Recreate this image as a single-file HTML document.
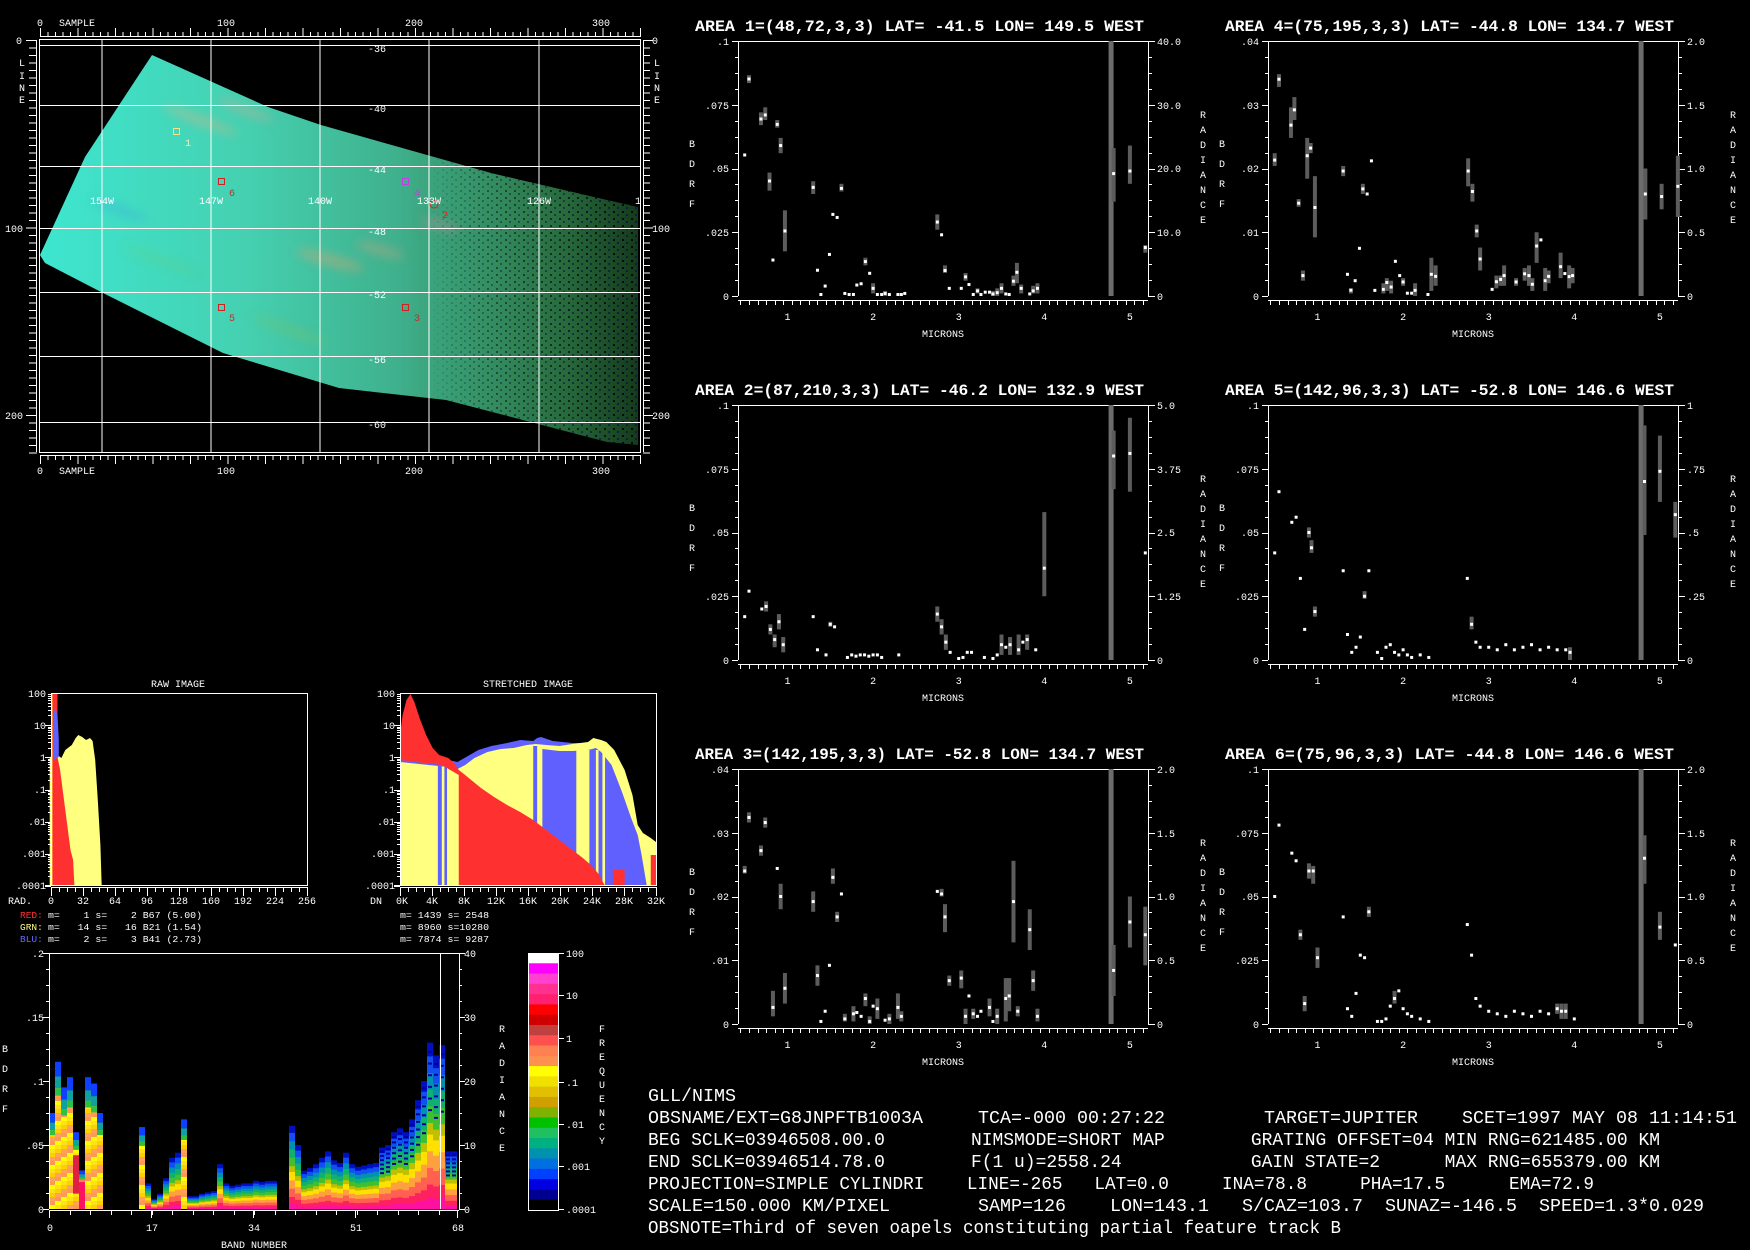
<!DOCTYPE html>
<html><head><meta charset="utf-8">
<style>
html,body{margin:0;padding:0;background:#000;}
svg{display:block;}
text{font-family:"Liberation Mono",monospace;fill:#fff;}
.s{font-size:10px;}
.t{font-size:16px;font-weight:bold;}
.b{font-size:18px;}
.m{font-size:9.5px;}
.c{text-anchor:middle;}
.e{text-anchor:end;}
</style></head>
<body>
<svg id="sv" xmlns="http://www.w3.org/2000/svg" width="1750" height="1250" viewBox="0 0 1750 1250">
<rect width="1750" height="1250" fill="#000"/>
<defs>
<linearGradient id="ig" x1="0" y1="0" x2="1" y2="0" gradientUnits="objectBoundingBox">
<stop offset="0" stop-color="#3ee6cf"/>
<stop offset="0.35" stop-color="#45d0b0"/>
<stop offset="0.6" stop-color="#3fb08c"/>
<stop offset="0.75" stop-color="#348f62"/>
<stop offset="0.88" stop-color="#276a3c"/>
<stop offset="1" stop-color="#143a1c"/>
</linearGradient>
<linearGradient id="mg" x1="430" y1="0" x2="640" y2="0" gradientUnits="userSpaceOnUse">
<stop offset="0" stop-color="#000"/>
<stop offset="0.5" stop-color="#fff" stop-opacity="0.5"/>
<stop offset="1" stop-color="#fff" stop-opacity="0.9"/>
</linearGradient>
<mask id="dm"><rect x="0" y="0" width="700" height="500" fill="url(#mg)"/></mask>
<filter id="bl"><feGaussianBlur stdDeviation="5"/></filter>
<pattern id="dots" width="9" height="7" patternUnits="userSpaceOnUse">
<rect x="1" y="1" width="2" height="2" fill="#000"/><rect x="5" y="4" width="2" height="2" fill="#0a1a40"/>
</pattern>
<clipPath id="imc"><polygon points="152,55 268,107 321,125 491,173 607,200 638,207 638,445 607,442 446,400 339,388 223,353 103,293 45,263 40,255 85,157"/></clipPath>
</defs>

<g id="img">
<polygon points="152,55 268,107 321,125 491,173 607,200 638,207 638,445 607,442 446,400 339,388 223,353 103,293 45,263 40,255 85,157" fill="url(#ig)"/>
<g clip-path="url(#imc)">
<g filter="url(#bl)" opacity="0.4">
<ellipse cx="200" cy="120" rx="40" ry="5" fill="#e8b080" transform="rotate(20 200 120)"/>
<ellipse cx="245" cy="110" rx="30" ry="4" fill="#f0a090" transform="rotate(20 245 110)"/>
<ellipse cx="330" cy="260" rx="35" ry="6" fill="#e8a070" transform="rotate(15 330 260)"/>
<ellipse cx="380" cy="250" rx="25" ry="5" fill="#d8a080" transform="rotate(15 380 250)"/>
<ellipse cx="440" cy="225" rx="20" ry="5" fill="#c890a0" transform="rotate(15 440 225)"/>
<ellipse cx="120" cy="210" rx="30" ry="4" fill="#40a0e0" transform="rotate(20 120 210)"/>
<ellipse cx="160" cy="260" rx="40" ry="4" fill="#60d080" transform="rotate(20 160 260)"/>
<ellipse cx="290" cy="330" rx="40" ry="4" fill="#80c060" transform="rotate(20 290 330)"/>
</g>
<g mask="url(#dm)">
<rect x="420" y="150" width="230" height="300" fill="url(#dots)"/>
</g>
</g>
<g stroke="#fff" stroke-width="1" fill="none">
<rect x="39.5" y="39.5" width="601" height="413"/>
<line x1="102" y1="40" x2="102" y2="452"/><line x1="211" y1="40" x2="211" y2="452"/><line x1="320" y1="40" x2="320" y2="452"/><line x1="429" y1="40" x2="429" y2="452"/><line x1="539" y1="40" x2="539" y2="452"/>
<line x1="40" y1="45.5" x2="640" y2="45.5"/><line x1="40" y1="105.5" x2="640" y2="105.5"/><line x1="40" y1="166.5" x2="640" y2="166.5"/><line x1="40" y1="228.5" x2="640" y2="228.5"/><line x1="40" y1="292.5" x2="640" y2="292.5"/><line x1="40" y1="356.5" x2="640" y2="356.5"/><line x1="40" y1="422.5" x2="640" y2="422.5"/>
</g>
<g id="imgticks" stroke="#fff" stroke-width="1"></g>
<rect x="173.5" y="128.5" width="6" height="6" fill="none" stroke="#ffe080"/>
<rect x="218.5" y="178.5" width="6" height="6" fill="none" stroke="#d02020"/>
<rect x="402.5" y="178.5" width="6" height="6" fill="none" stroke="#c040e0"/>
<circle cx="434" cy="204" r="4" fill="none" stroke="#e02020"/>
<rect x="218.5" y="304.5" width="6" height="6" fill="none" stroke="#d02020"/>
<rect x="402.5" y="304.5" width="6" height="6" fill="none" stroke="#d02020"/>
<text class="s" x="185" y="146" style="fill:#f0f0c0">1</text>
<text class="s" x="229" y="196" style="fill:#c03030">6</text>
<text class="s" x="414" y="196" style="fill:#c040e0">4</text>
<text class="s" x="442" y="218" style="fill:#e02020">2</text>
<text class="s" x="229" y="321" style="fill:#c03030">5</text>
<text class="s" x="414" y="321" style="fill:#c03030">3</text>
<text class="s" x="37" y="26">0</text><text class="s" x="59" y="26">SAMPLE</text>
<text class="s c" x="226" y="26">100</text><text class="s c" x="414" y="26">200</text><text class="s c" x="601" y="26">300</text>
<text class="s" x="37" y="474">0</text><text class="s" x="59" y="474">SAMPLE</text>
<text class="s c" x="226" y="474">100</text><text class="s c" x="414" y="474">200</text><text class="s c" x="601" y="474">300</text>
<text class="s" x="16" y="44">0</text><text class="s" x="5" y="232">100</text><text class="s" x="5" y="419">200</text>
<text class="s" x="652" y="44">0</text><text class="s" x="652" y="232">100</text><text class="s" x="652" y="419">200</text>
<text class="s c" x="22" y="66">L</text><text class="s c" x="22" y="79">I</text><text class="s c" x="22" y="91">N</text><text class="s c" x="22" y="103">E</text>
<text class="s c" x="657" y="66">L</text><text class="s c" x="657" y="79">I</text><text class="s c" x="657" y="91">N</text><text class="s c" x="657" y="103">E</text>
<text class="s c" x="377" y="52">-36</text><text class="s c" x="377" y="112">-40</text><text class="s c" x="377" y="173">-44</text><text class="s c" x="377" y="235">-48</text><text class="s c" x="377" y="298">-52</text><text class="s c" x="377" y="363">-56</text><text class="s c" x="377" y="428">-60</text>
<text class="s c" x="102" y="204">154W</text><text class="s c" x="211" y="204">147W</text><text class="s c" x="320" y="204">140W</text><text class="s c" x="429" y="204">133W</text><text class="s c" x="539" y="204">126W</text><text class="s c" x="638" y="204">1</text>
</g>

<g id="a1" transform="translate(738,41)">
<text class="t" x="-43" y="-10" textLength="449" lengthAdjust="spacingAndGlyphs">AREA 1=(48,72,3,3) LAT= -41.5 LON= 149.5 WEST</text>
<text class="s e" x="-9" y="4">.1</text><text class="s e" x="-9" y="68">.075</text><text class="s e" x="-9" y="131">.05</text><text class="s e" x="-9" y="195">.025</text><text class="s e" x="-9" y="259">0</text>
<text class="s" x="419" y="4">40.0</text><text class="s" x="419" y="68">30.0</text><text class="s" x="419" y="131">20.0</text><text class="s" x="419" y="195">10.0</text><text class="s" x="419" y="259">0</text>
</g>
<g id="a4" transform="translate(1268,41)">
<text class="t" x="-43" y="-10" textLength="449" lengthAdjust="spacingAndGlyphs">AREA 4=(75,195,3,3) LAT= -44.8 LON= 134.7 WEST</text>
<text class="s e" x="-9" y="4">.04</text><text class="s e" x="-9" y="68">.03</text><text class="s e" x="-9" y="131">.02</text><text class="s e" x="-9" y="195">.01</text><text class="s e" x="-9" y="259">0</text>
<text class="s" x="419" y="4">2.0</text><text class="s" x="419" y="68">1.5</text><text class="s" x="419" y="131">1.0</text><text class="s" x="419" y="195">0.5</text><text class="s" x="419" y="259">0</text>
</g>
<g id="a2" transform="translate(738,405)">
<text class="t" x="-43" y="-10" textLength="449" lengthAdjust="spacingAndGlyphs">AREA 2=(87,210,3,3) LAT= -46.2 LON= 132.9 WEST</text>
<text class="s e" x="-9" y="4">.1</text><text class="s e" x="-9" y="68">.075</text><text class="s e" x="-9" y="131">.05</text><text class="s e" x="-9" y="195">.025</text><text class="s e" x="-9" y="259">0</text>
<text class="s" x="419" y="4">5.0</text><text class="s" x="419" y="68">3.75</text><text class="s" x="419" y="131">2.5</text><text class="s" x="419" y="195">1.25</text><text class="s" x="419" y="259">0</text>
</g>
<g id="a5" transform="translate(1268,405)">
<text class="t" x="-43" y="-10" textLength="449" lengthAdjust="spacingAndGlyphs">AREA 5=(142,96,3,3) LAT= -52.8 LON= 146.6 WEST</text>
<text class="s e" x="-9" y="4">.1</text><text class="s e" x="-9" y="68">.075</text><text class="s e" x="-9" y="131">.05</text><text class="s e" x="-9" y="195">.025</text><text class="s e" x="-9" y="259">0</text>
<text class="s" x="419" y="4">1</text><text class="s" x="419" y="68">.75</text><text class="s" x="419" y="131">.5</text><text class="s" x="419" y="195">.25</text><text class="s" x="419" y="259">0</text>
</g>
<g id="a3" transform="translate(738,769)">
<text class="t" x="-43" y="-10" textLength="449" lengthAdjust="spacingAndGlyphs">AREA 3=(142,195,3,3) LAT= -52.8 LON= 134.7 WEST</text>
<text class="s e" x="-9" y="4">.04</text><text class="s e" x="-9" y="68">.03</text><text class="s e" x="-9" y="131">.02</text><text class="s e" x="-9" y="195">.01</text><text class="s e" x="-9" y="259">0</text>
<text class="s" x="419" y="4">2.0</text><text class="s" x="419" y="68">1.5</text><text class="s" x="419" y="131">1.0</text><text class="s" x="419" y="195">0.5</text><text class="s" x="419" y="259">0</text>
</g>
<g id="a6" transform="translate(1268,769)">
<text class="t" x="-43" y="-10" textLength="449" lengthAdjust="spacingAndGlyphs">AREA 6=(75,96,3,3) LAT= -44.8 LON= 146.6 WEST</text>
<text class="s e" x="-9" y="4">.1</text><text class="s e" x="-9" y="68">.075</text><text class="s e" x="-9" y="131">.05</text><text class="s e" x="-9" y="195">.025</text><text class="s e" x="-9" y="259">0</text>
<text class="s" x="419" y="4">2.0</text><text class="s" x="419" y="68">1.5</text><text class="s" x="419" y="131">1.0</text><text class="s" x="419" y="195">0.5</text><text class="s" x="419" y="259">0</text>
</g>
<g transform="translate(738,41)"><text class="s c" x="49.5" y="279">1</text><text class="s c" x="135.1" y="279">2</text><text class="s c" x="220.7" y="279">3</text><text class="s c" x="306.3" y="279">4</text><text class="s c" x="391.9" y="279">5</text><text class="s c" x="205" y="296">MICRONS</text><text class="s c" x="-46" y="106">B</text><text class="s c" x="-46" y="126">D</text><text class="s c" x="-46" y="146">R</text><text class="s c" x="-46" y="166">F</text><text class="s c" x="465" y="77">R</text><text class="s c" x="465" y="92">A</text><text class="s c" x="465" y="107">D</text><text class="s c" x="465" y="122">I</text><text class="s c" x="465" y="137">A</text><text class="s c" x="465" y="152">N</text><text class="s c" x="465" y="167">C</text><text class="s c" x="465" y="182">E</text></g>
<g transform="translate(1268,41)"><text class="s c" x="49.5" y="279">1</text><text class="s c" x="135.1" y="279">2</text><text class="s c" x="220.7" y="279">3</text><text class="s c" x="306.3" y="279">4</text><text class="s c" x="391.9" y="279">5</text><text class="s c" x="205" y="296">MICRONS</text><text class="s c" x="-46" y="106">B</text><text class="s c" x="-46" y="126">D</text><text class="s c" x="-46" y="146">R</text><text class="s c" x="-46" y="166">F</text><text class="s c" x="465" y="77">R</text><text class="s c" x="465" y="92">A</text><text class="s c" x="465" y="107">D</text><text class="s c" x="465" y="122">I</text><text class="s c" x="465" y="137">A</text><text class="s c" x="465" y="152">N</text><text class="s c" x="465" y="167">C</text><text class="s c" x="465" y="182">E</text></g>
<g transform="translate(738,405)"><text class="s c" x="49.5" y="279">1</text><text class="s c" x="135.1" y="279">2</text><text class="s c" x="220.7" y="279">3</text><text class="s c" x="306.3" y="279">4</text><text class="s c" x="391.9" y="279">5</text><text class="s c" x="205" y="296">MICRONS</text><text class="s c" x="-46" y="106">B</text><text class="s c" x="-46" y="126">D</text><text class="s c" x="-46" y="146">R</text><text class="s c" x="-46" y="166">F</text><text class="s c" x="465" y="77">R</text><text class="s c" x="465" y="92">A</text><text class="s c" x="465" y="107">D</text><text class="s c" x="465" y="122">I</text><text class="s c" x="465" y="137">A</text><text class="s c" x="465" y="152">N</text><text class="s c" x="465" y="167">C</text><text class="s c" x="465" y="182">E</text></g>
<g transform="translate(1268,405)"><text class="s c" x="49.5" y="279">1</text><text class="s c" x="135.1" y="279">2</text><text class="s c" x="220.7" y="279">3</text><text class="s c" x="306.3" y="279">4</text><text class="s c" x="391.9" y="279">5</text><text class="s c" x="205" y="296">MICRONS</text><text class="s c" x="-46" y="106">B</text><text class="s c" x="-46" y="126">D</text><text class="s c" x="-46" y="146">R</text><text class="s c" x="-46" y="166">F</text><text class="s c" x="465" y="77">R</text><text class="s c" x="465" y="92">A</text><text class="s c" x="465" y="107">D</text><text class="s c" x="465" y="122">I</text><text class="s c" x="465" y="137">A</text><text class="s c" x="465" y="152">N</text><text class="s c" x="465" y="167">C</text><text class="s c" x="465" y="182">E</text></g>
<g transform="translate(738,769)"><text class="s c" x="49.5" y="279">1</text><text class="s c" x="135.1" y="279">2</text><text class="s c" x="220.7" y="279">3</text><text class="s c" x="306.3" y="279">4</text><text class="s c" x="391.9" y="279">5</text><text class="s c" x="205" y="296">MICRONS</text><text class="s c" x="-46" y="106">B</text><text class="s c" x="-46" y="126">D</text><text class="s c" x="-46" y="146">R</text><text class="s c" x="-46" y="166">F</text><text class="s c" x="465" y="77">R</text><text class="s c" x="465" y="92">A</text><text class="s c" x="465" y="107">D</text><text class="s c" x="465" y="122">I</text><text class="s c" x="465" y="137">A</text><text class="s c" x="465" y="152">N</text><text class="s c" x="465" y="167">C</text><text class="s c" x="465" y="182">E</text></g>
<g transform="translate(1268,769)"><text class="s c" x="49.5" y="279">1</text><text class="s c" x="135.1" y="279">2</text><text class="s c" x="220.7" y="279">3</text><text class="s c" x="306.3" y="279">4</text><text class="s c" x="391.9" y="279">5</text><text class="s c" x="205" y="296">MICRONS</text><text class="s c" x="-46" y="106">B</text><text class="s c" x="-46" y="126">D</text><text class="s c" x="-46" y="146">R</text><text class="s c" x="-46" y="166">F</text><text class="s c" x="465" y="77">R</text><text class="s c" x="465" y="92">A</text><text class="s c" x="465" y="107">D</text><text class="s c" x="465" y="122">I</text><text class="s c" x="465" y="137">A</text><text class="s c" x="465" y="152">N</text><text class="s c" x="465" y="167">C</text><text class="s c" x="465" y="182">E</text></g>

<g id="hist">
<text class="s c" x="178" y="687">RAW IMAGE</text>
<text class="s c" x="528" y="687">STRETCHED IMAGE</text>
<g id="rawfill"></g>
<g id="strfill"></g>
<rect x="51.5" y="693.5" width="256" height="192" fill="none" stroke="#fff"/>
<rect x="400.5" y="693.5" width="256" height="192" fill="none" stroke="#fff"/>
<g id="histticks" stroke="#fff"></g>
<text class="s e" x="46" y="697">100</text><text class="s e" x="46" y="729">10</text><text class="s e" x="46" y="761">1</text><text class="s e" x="46" y="793">.1</text><text class="s e" x="46" y="825">.01</text><text class="s e" x="46" y="857">.001</text><text class="s e" x="46" y="889">.0001</text>
<text class="s e" x="395" y="697">100</text><text class="s e" x="395" y="729">10</text><text class="s e" x="395" y="761">1</text><text class="s e" x="395" y="793">.1</text><text class="s e" x="395" y="825">.01</text><text class="s e" x="395" y="857">.001</text><text class="s e" x="395" y="889">.0001</text>
<text class="s" x="8" y="904">RAD.</text>
<text class="s c" x="51" y="904">0</text><text class="s c" x="83" y="904">32</text><text class="s c" x="115" y="904">64</text><text class="s c" x="147" y="904">96</text><text class="s c" x="179" y="904">128</text><text class="s c" x="211" y="904">160</text><text class="s c" x="243" y="904">192</text><text class="s c" x="275" y="904">224</text><text class="s c" x="307" y="904">256</text>
<text class="s" x="370" y="904">DN</text>
<text class="s c" x="402" y="904">0K</text><text class="s c" x="432" y="904">4K</text><text class="s c" x="464" y="904">8K</text><text class="s c" x="496" y="904">12K</text><text class="s c" x="528" y="904">16K</text><text class="s c" x="560" y="904">20K</text><text class="s c" x="592" y="904">24K</text><text class="s c" x="624" y="904">28K</text><text class="s c" x="656" y="904">32K</text>
<text class="m" x="20" y="918" style="fill:#ff3030">RED:</text><text class="m" x="48" y="918" textLength="154" lengthAdjust="spacingAndGlyphs" xml:space="preserve">m=    1 s=    2 B67 (5.00)</text>
<text class="m" x="20" y="930" style="fill:#ffff80">GRN:</text><text class="m" x="48" y="930" textLength="154" lengthAdjust="spacingAndGlyphs" xml:space="preserve">m=   14 s=   16 B21 (1.54)</text>
<text class="m" x="20" y="942" style="fill:#6868ff">BLU:</text><text class="m" x="48" y="942" textLength="154" lengthAdjust="spacingAndGlyphs" xml:space="preserve">m=    2 s=    3 B41 (2.73)</text>
<text class="m" x="400" y="918" textLength="89" lengthAdjust="spacingAndGlyphs" xml:space="preserve">m= 1439 s= 2548</text>
<text class="m" x="400" y="930" textLength="89" lengthAdjust="spacingAndGlyphs" xml:space="preserve">m= 8960 s=10280</text>
<text class="m" x="400" y="942" textLength="89" lengthAdjust="spacingAndGlyphs" xml:space="preserve">m= 7874 s= 9287</text>
</g>

<g id="spec">
<g id="specbars"></g>
<g id="specticks" stroke="#fff"></g>
<text class="s e" x="44" y="957">.2</text><text class="s e" x="44" y="1021">.15</text><text class="s e" x="44" y="1085">.1</text><text class="s e" x="44" y="1149">.05</text><text class="s e" x="44" y="1213">0</text>
<text class="s" x="464" y="957">40</text><text class="s" x="464" y="1021">30</text><text class="s" x="464" y="1085">20</text><text class="s" x="464" y="1149">10</text><text class="s" x="464" y="1213">0</text>
<text class="s c" x="50" y="1231">0</text><text class="s c" x="152" y="1231">17</text><text class="s c" x="254" y="1231">34</text><text class="s c" x="356" y="1231">51</text><text class="s c" x="458" y="1231">68</text>
<text class="s c" x="254" y="1248">BAND NUMBER</text>
<text class="s c" x="5" y="1052">B</text><text class="s c" x="5" y="1072">D</text><text class="s c" x="5" y="1092">R</text><text class="s c" x="5" y="1112">F</text>
<text class="s c" x="502" y="1032">R</text><text class="s c" x="502" y="1049">A</text><text class="s c" x="502" y="1066">D</text><text class="s c" x="502" y="1083">I</text><text class="s c" x="502" y="1100">A</text><text class="s c" x="502" y="1117">N</text><text class="s c" x="502" y="1134">C</text><text class="s c" x="502" y="1151">E</text>
<g id="cbar"></g>
<text class="s" x="566" y="957">100</text><text class="s" x="566" y="999">10</text><text class="s" x="566" y="1042">1</text><text class="s" x="566" y="1086">.1</text><text class="s" x="566" y="1128">.01</text><text class="s" x="566" y="1170">.001</text><text class="s" x="566" y="1213">.0001</text>
<text class="s c" x="602" y="1032">F</text><text class="s c" x="602" y="1046">R</text><text class="s c" x="602" y="1060">E</text><text class="s c" x="602" y="1074">Q</text><text class="s c" x="602" y="1088">U</text><text class="s c" x="602" y="1102">E</text><text class="s c" x="602" y="1116">N</text><text class="s c" x="602" y="1130">C</text><text class="s c" x="602" y="1144">Y</text>
</g>

<g>
<text class="b" x="648" y="1101" textLength="88" lengthAdjust="spacingAndGlyphs">GLL/NIMS</text>
<text class="b" x="648" y="1123" textLength="1089" lengthAdjust="spacingAndGlyphs" xml:space="preserve">OBSNAME/EXT=G8JNPFTB1003A     TCA=-000 00:27:22         TARGET=JUPITER    SCET=1997 MAY 08 11:14:51</text>
<text class="b" x="648" y="1145" textLength="1012" lengthAdjust="spacingAndGlyphs" xml:space="preserve">BEG SCLK=03946508.00.0        NIMSMODE=SHORT MAP        GRATING OFFSET=04 MIN RNG=621485.00 KM</text>
<text class="b" x="648" y="1167" textLength="1012" lengthAdjust="spacingAndGlyphs" xml:space="preserve">END SCLK=03946514.78.0        F(1 u)=2558.24            GAIN STATE=2      MAX RNG=655379.00 KM</text>
<text class="b" x="648" y="1189" textLength="946" lengthAdjust="spacingAndGlyphs" xml:space="preserve">PROJECTION=SIMPLE CYLINDRI    LINE=-265   LAT=0.0     INA=78.8     PHA=17.5      EMA=72.9</text>
<text class="b" x="648" y="1211" textLength="1056" lengthAdjust="spacingAndGlyphs" xml:space="preserve">SCALE=150.000 KM/PIXEL        SAMP=126    LON=143.1   S/CAZ=103.7  SUNAZ=-146.5  SPEED=1.3*0.029</text>
<text class="b" x="648" y="1233" textLength="693" lengthAdjust="spacingAndGlyphs" xml:space="preserve">OBSNOTE=Third of seven oapels constituting partial feature track B</text>
</g>
</svg>
<script>
(function(){
var NS='http://www.w3.org/2000/svg';
function E(tag,a,p){var e=document.createElementNS(NS,tag);for(var k in a)e.setAttribute(k,a[k]);p.appendChild(e);return e;}
function L(p,x1,y1,x2,y2,c){E('line',{x1:x1,y1:y1,x2:x2,y2:y2,stroke:c||'#fff','stroke-width':1},p);}
function R(p,x,y,w,h,c){E('rect',{x:x,y:y,width:w,height:h,fill:c},p);}
var it=document.getElementById('imgticks');
for(var s=0;s<=320;s+=4){var x=40+s*1.875+0.5;if(x>641)break;var lg=(s%20==0);L(it,x,lg?28:32,x,37);L(it,x,455,x,lg?464:460);}
for(var l=0;l<=220;l+=4){var y=40+l*1.875+0.5;if(y>453)break;var lg=(l%100==0);L(it,lg?26:29,y,37,y);L(it,643,y,lg?653:650,y);}
L(it,40,36.5,640,36.5);L(it,40,455.5,640,455.5);L(it,36.5,40,36.5,452);L(it,643.5,40,643.5,452);
var W=410,H=255,m1=49.5,sc=85.6;
function plot(id,pts){
 var g=document.getElementById(id);
 L(g,0,0.5,W,0.5);L(g,0.5,0,0.5,H);L(g,W+0.5,0,W+0.5,H);
 for(var i=0;i<=16;i++){var y=Math.round(i*H/16)+0.5;var len=(i%4==0)?6:3;L(g,-len,y,0,y);L(g,W,y,W+len+1,y);}
 L(g,0,H+4.5,W,H+4.5);
 for(var k=0;k<=48;k++){var lam=0.45+k*0.1;var x=Math.round(m1+(lam-1)*sc)+0.5;if(x>W+1)break;var t=Math.abs(lam*2-Math.round(lam*2))<0.01;L(g,x,H+4,x,H+(t?12:9));}
 var bx=m1+(4.78-1)*sc;R(g,bx-2.5,0,5,H,'#6c6c6c');
 pts.forEach(function(p){var x=m1+(p[0]-1)*sc;if(p.length>2){R(g,x-2,H-p[3]*H,4,(p[3]-p[2])*H,'#5c5c5c');}
  var y=H-p[1]*H;R(g,x-1.5,Math.min(y-1.5,H-3),3,3,'#fff');});
}
plot('a1',[[.5,.553],[.55,.851,.835,.866],[.69,.694,.67,.72],[.74,.71,.69,.74],[.88,.673,.66,.69],[.92,.59,.56,.62],[.79,.451,.413,.484],[.97,.255,.175,.336],[.83,.141],[1.3,.426,.40,.45],[1.63,.422,.41,.44],[1.53,.32],[1.58,.308],[1.49,.163],[1.35,.101],[1.44,.039],[1.39,.004],[1.67,.01],[1.72,.004],[1.77,.004],[1.81,.043],[1.86,.048],[1.91,.135,.12,.15],[1.96,.089],[2.0,.03,.01,.05],[2.05,0],[2.1,0],[2.14,.01,0,.02],[2.19,0],[2.29,0],[2.33,0],[2.37,.01],[2.75,.29,.26,.32],[2.8,.24],[2.84,.1,.09,.12],[2.89,.03],[3.03,.03],[3.08,.075,.06,.09],[3.12,.045],[3.17,0],[3.22,.02,.01,.03],[3.26,.005],[3.31,.015],[3.36,.015],[3.40,.008,0,.02],[3.45,.013,0,.03],[3.5,.03,.01,.05],[3.55,.008],[3.59,0],[3.64,.058,.04,.08],[3.68,.093,.05,.13],[3.73,.03,.01,.045],[3.83,.008],[3.87,.02,.01,.04],[3.92,.03,.01,.05],[4.81,.48,.37,.58],[5.0,.49,.44,.59],[5.18,.19,.17,.2]]);
plot('a4',[[.5,.533,.51,.56],[.55,.85,.82,.87],[.69,.67,.62,.74],[.73,.73,.69,.78],[.78,.364,.35,.38],[.83,.08,.06,.1],[.88,.55,.46,.62],[.92,.58,.56,.6],[.97,.347,.23,.47],[1.3,.49,.47,.51],[1.35,.085],[1.39,.023,.01,.03],[1.44,.06],[1.49,.187],[1.53,.42,.4,.44],[1.58,.40],[1.63,.53],[1.67,.022],[1.77,.026,.01,.05],[1.81,.053,.02,.07],[1.86,.035,.01,.06],[1.91,.136],[1.96,.08],[2.0,.055,.04,.07],[2.05,.011],[2.1,.011],[2.14,.022,0,.05],[2.29,.004],[2.33,.085,.02,.15],[2.38,.077,.04,.12],[2.76,.49,.43,.54],[2.81,.41,.37,.44],[2.86,.255,.23,.28],[2.9,.145,.1,.19],[3.04,.026],[3.09,.056,.03,.08],[3.14,.065,.04,.08],[3.18,.08,.04,.12],[3.32,.055,.04,.07],[3.42,.087,.06,.11],[3.47,.08,.04,.12],[3.51,.046,.02,.07],[3.56,.196,.13,.25],[3.61,.22],[3.66,.06,.02,.11],[3.7,.077,.05,.1],[3.84,.115,.07,.17],[3.89,.088],[3.94,.076,.03,.12],[3.98,.08,.05,.11],[4.83,.40,.3,.5],[5.02,.39,.34,.44],[5.21,.43,.31,.55]]);
plot('a3',[[.5,.6,.59,.62],[.55,.81,.79,.83],[.69,.68,.66,.7],[.74,.79,.77,.81],[.83,.065,.03,.13],[.88,.61],[.92,.5,.45,.55],[.97,.14,.08,.2],[1.3,.48,.44,.52],[1.35,.19,.15,.23],[1.39,.01],[1.44,.05],[1.49,.23],[1.53,.575,.55,.61],[1.58,.42,.4,.44],[1.63,.51],[1.67,.02,.01,.04],[1.77,.04,.01,.07],[1.81,.045],[1.86,.03],[1.91,.1,.07,.12],[1.96,.01,0,.03],[2.0,.07],[2.05,.06,.02,.1],[2.14,.015],[2.19,.02,0,.04],[2.29,.065,.02,.12],[2.33,.03,.01,.05],[2.75,.52],[2.8,.51,.5,.53],[2.84,.42,.36,.47],[2.89,.17,.15,.19],[3.03,.18,.14,.21],[3.08,.03,0,.06],[3.12,.11],[3.17,.04,.02,.06],[3.22,.03],[3.26,.05],[3.36,.065,.03,.1],[3.4,.01],[3.45,.03,0,.06],[3.55,.1,.01,.18],[3.59,.11,.05,.18],[3.64,.48,.32,.64],[3.69,.05,.03,.07],[3.83,.37,.29,.45],[3.87,.17,.13,.21],[3.92,.03,.01,.06],[4.81,.21,.11,.31],[5.0,.4,.3,.5],[5.18,.35,.23,.46]]);
plot('a2',[[.5,.17],[.55,.27],[.7,.2],[.75,.21,.19,.23],[.8,.12,.1,.14],[.85,.08,.05,.1],[.9,.15,.12,.18],[.95,.06,.03,.09],[1.3,.17],[1.35,.04],[1.45,.02],[1.5,.14,.13,.15],[1.55,.13],[1.7,.01],[1.75,.02],[1.8,.015],[1.85,.02],[1.9,.02],[1.95,.015],[2.0,.02],[2.05,.02],[2.1,.01],[2.3,.02],[2.75,.18,.15,.21],[2.8,.13,.1,.16],[2.85,.07,.04,.1],[2.9,.03],[3.0,0],[3.05,.01],[3.1,.03],[3.15,.03],[3.3,.01],[3.4,0],[3.45,.02],[3.5,.06,.02,.1],[3.55,.05],[3.6,.06,.02,.09],[3.7,.04,.02,.1],[3.75,.07],[3.8,.08,.04,.1],[3.9,.04],[4.0,.36,.25,.58],[4.81,.8,.67,.9],[5.0,.81,.66,.95],[5.18,.42]]);
plot('a5',[[.5,.42],[.55,.66],[.7,.54],[.75,.56],[.8,.32],[.85,.12],[.9,.5,.48,.52],[.93,.44,.42,.47],[.97,.19,.17,.21],[1.3,.35],[1.35,.1],[1.4,.03],[1.45,.05],[1.5,.09],[1.55,.25,.24,.27],[1.6,.35],[1.7,.03],[1.75,0],[1.8,.05],[1.85,.06],[1.9,.03],[1.95,.02],[2.0,.04],[2.05,.02],[2.1,.01],[2.2,.02],[2.3,.01],[2.75,.32],[2.8,.14,.12,.17],[2.85,.07],[2.9,.05],[3.0,.05],[3.1,.04],[3.2,.06],[3.3,.04],[3.4,.05],[3.5,.06],[3.6,.04],[3.7,.05],[3.8,.04],[3.9,.04],[3.95,.03,0,.05],[4.82,.7,.49,.92],[5.0,.74,.62,.88],[5.18,.57,.48,.62]]);
plot('a6',[[.5,.5],[.55,.78],[.7,.67],[.75,.64],[.8,.35,.33,.37],[.85,.08,.05,.11],[.9,.6,.57,.63],[.95,.6,.55,.62],[1.0,.26,.22,.3],[1.3,.42],[1.35,.06],[1.4,.03],[1.45,.12],[1.5,.27],[1.55,.26],[1.6,.44,.42,.46],[1.7,.01],[1.75,.01],[1.8,.02],[1.85,.07],[1.9,.1,.08,.13],[1.95,.13],[2.0,.06],[2.05,.04],[2.1,.03],[2.2,.02],[2.3,.01],[2.75,.39],[2.8,.27],[2.85,.1],[2.9,.07],[3.0,.05],[3.1,.04],[3.2,.03],[3.3,.05],[3.4,.04],[3.5,.03],[3.6,.05],[3.7,.04],[3.8,.06,.04,.08],[3.85,.05,.02,.08],[3.9,.05,.02,.08],[4.0,.02],[4.82,.65,.55,.74],[5.0,.38,.33,.44],[5.18,.31]]);
var ht=document.getElementById('histticks');
function ly(d){return 693+d*32.17;}
[51,400].forEach(function(x0){
 for(var d=0;d<6;d++){for(var m=1;m<=9;m++){var y=Math.round(ly(d+1-Math.log10(m)))+0.5;var len=(m==1)?6:3;L(ht,x0-len,y,x0,y);}}
 L(ht,x0-6,885.5,x0,885.5);
 for(var k=0;k<=32;k++){var x=x0+k*8+0.5;L(ht,x,887,x,(k%4==0)?896:892);}
 L(ht,x0,887.5,x0+256,887.5);
});
var rf=document.getElementById('rawfill');
function rx(o){return 51+(o-39)*1.30;}
function poly(p,pts,c){E('polygon',{points:pts.map(function(q){return q[0]+','+q[1];}).join(' '),fill:c},p);}
poly(rf,[[38,757],[44,755],[47,758],[50,750],[55,745],[58,738],[60,735],[63,737],[66,740],[69,738],[71,741],[73,760],[75,800],[77,845],[78,886],[38,886]].map(function(q){return [rx(q[0]),q[1]];}),'#ffff80');
poly(rf,[[39,693],[44,693],[44,757],[46,770],[48,790],[50,810],[52,830],[54,850],[56,860],[57,886],[39,886]].map(function(q){return [rx(q[0]),q[1]];}),'#ff3030');
poly(rf,[[40,726],[42,707],[44,715],[45,740],[45,757],[40,760]].map(function(q){return [rx(q[0]),q[1]];}),'#6060ff');
R(rf,51,693,2,193,'#ff8040');
var sf=document.getElementById('strfill');
function sx(o){return 400+(o-308)*1.306;}
function P(a){return a.map(function(q){return [sx(q[0]),q[1]];});}
poly(sf,P([[308,752],[330,757],[345,760],[352,762],[360,756],[368,750],[378,746],[390,743],[400,740],[410,741],[413,738],[416,737],[425,741],[440,743],[452,743],[456,740],[462,742],[470,760],[478,790],[485,815],[490,830],[493,850],[497,886],[308,886]]),'#6060ff');
poly(sf,P([[308,762],[330,765],[345,767],[352,769],[358,765],[365,758],[375,752],[385,749],[395,748],[405,745],[412,744],[420,745],[430,746],[440,744],[452,742],[456,738],[462,740],[466,742],[472,750],[480,770],[486,795],[490,825],[494,833],[500,838],[504,842],[504,886],[308,886]]),'#ffff80');
poly(sf,P([[417,749],[430,751],[440,751],[452,750],[458,748],[462,752],[470,765],[478,792],[485,818],[490,835],[493,855],[497,886],[417,886]]),'#6060ff');
[[337,340],[342,344]].forEach(function(s){var a=sx(s[0]),b=sx(s[1]);R(sf,a,760,b-a,126,'#6060ff');});
[[443,453],[458,460],[463,465]].forEach(function(s){var a=sx(s[0]),b=sx(s[1]);R(sf,a,750,b-a,136,'#ffff80');});
[[410,413]].forEach(function(s){var a=sx(s[0]),b=sx(s[1]);R(sf,a,746,b-a,140,'#6060ff');});
poly(sf,P([[308,735],[310,715],[313,700],[316,694],[319,702],[323,718],[328,735],[333,748],[338,755],[345,758],[350,764],[353,770],[356,773],[370,788],[380,797],[390,805],[400,812],[410,820],[420,830],[430,840],[440,850],[448,858],[455,866],[460,874],[465,886],[353,886],[353,775],[340,765],[320,762],[308,760]]),'#ff3030');
R(sf,sx(471),870,sx(480)-sx(471),16,'#ff3030');R(sf,sx(500),855,sx(504)-sx(500),31,'#ff3030');
var sb=document.getElementById('specbars');var st=document.getElementById('specticks');
var X0=49,BW=6,YB=1209,YS=256/0.2;
var hs={0:.075,1:.115,2:.095,3:.103,4:.06,5:.03,6:.103,7:.098,8:.075,15:.064,16:.02,17:.008,18:.012,19:.024,20:.04,21:.044,22:.07,23:.01,24:.01,25:.012,26:.013,27:.014,28:.035,29:.02,30:.018,31:.019,32:.02,33:.02,34:.022,35:.021,36:.022,37:.022,40:.065,41:.05,42:.03,43:.032,44:.035,45:.04,46:.045,47:.038,48:.036,49:.044,50:.035,51:.033,52:.034,53:.035,54:.036,55:.048,56:.05,57:.06,58:.063,59:.06,60:.07,61:.085,62:.1,63:.13,64:.12,65:.128,66:.045,67:.045};
var leftCols=['#ffff00','#ffa060','#ffe020','#ff9850','#ffd000'];
var normal=[[0,'#ff10a0'],[.07,'#ff2060'],[.15,'#ff6050'],[.25,'#ffa040'],[.35,'#ffe000'],[.45,'#c0c000'],[.52,'#40c030'],[.62,'#10b070'],[.72,'#0090b0'],[.82,'#1050f0'],[.92,'#0010c0']];
for(var b in hs){b=+b;var h=hs[b]*YS;var x=X0+b*BW;
 if(b<=8||b==15||b==22){var fillH=h*0.82;
  for(var yy=0;yy<fillH;yy+=4){R(sb,x,YB-yy-4,BW,4,leftCols[(b*7+yy/4*3)%5]);}
  if(b==5){R(sb,x,YB-h,BW,h,'#ff1060');R(sb,x,YB-h,BW,h*0.3,'#ff8050');}
  if(b==4||b==20||b==21){R(sb,x,YB-h*0.7,BW,h*0.5,'#e02040');}
  R(sb,x,YB-h,BW,h*0.1,'#1040ff');R(sb,x,YB-h*0.9,BW,h*0.08,'#10a0a0');R(sb,x,YB-h*0.82,BW,h*0.05,'#30c040');
 } else {
  for(var i=0;i<normal.length;i++){var f0=normal[i][0],f1=(i+1<normal.length)?normal[i+1][0]:1;R(sb,x,YB-h*f1,BW,h*(f1-f0)+0.5,normal[i][1]);}
  if(b>=55){for(var k=0;k<6;k++){R(sb,x+1,YB-h*(0.6+k*0.07),BW-2,2,'#0000a0');}}
 }
}
L(st,49,953.5,459,953.5);L(st,440.5,953,440.5,1209);
L(st,49.5,953,49.5,1209);L(st,459.5,953,459.5,1209);
for(var i=0;i<=16;i++){var y=Math.round(953+i*16)+0.5;var len=(i%4==0)?6:3;L(st,49-len,y,49,y);L(st,459,y,459+len,y);}
L(st,49,1210.5,459,1210.5);
[0,17,34,51,68].forEach(function(v){var x=X0+v*BW+0.5;L(st,x,1210,x,1218);});
for(var k=1;k<20;k++){var x=Math.round(X0+k*20.5)+0.5;if(x<459)L(st,x,1210,x,1215);}
var cb=document.getElementById('cbar');
var cc=['#ffffff','#ff00ff','#ff40d0','#ff3090','#ff2070','#ff0000','#d00000','#c04040','#ff5050','#ff8050','#ff9050','#ffff00','#f0e000','#e0c000','#d0a000','#80b000','#00c000','#20c060','#00b080','#0090b0','#0070e0','#0040ff','#0000e0','#000090','#000000'];
var n=cc.length,ch=257/n;
for(var i=0;i<n;i++){R(cb,528,953+i*ch,30,ch+0.5,cc[i]);}
E('rect',{x:528.5,y:953.5,width:30,height:257,fill:'none',stroke:'#fff'},cb);
[953,995,1038,1082,1124,1166,1209].forEach(function(y){L(cb,559,y+0.5,564,y+0.5);});
})();
</script>
</body></html>
